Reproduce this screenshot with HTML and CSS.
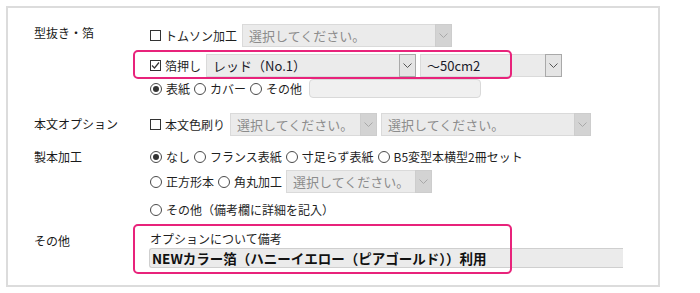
FILE: index.html
```html
<!DOCTYPE html>
<html lang="ja">
<head>
<meta charset="utf-8">
<title>オプション</title>
<link rel="stylesheet" href="styles.css">
</head>
<body>
<div class="box">
  <div class="row row1">
    <div class="label lh18">型抜き・箔</div>
    <div class="content">
      <div class="line h23">
        <span class="cb"></span><span class="opt">トムソン加工</span>
        <span class="sel dis w210 ml5"><span class="val">選択してください。</span><span class="arr"><svg width="9" height="6" viewBox="0 0 9 6"><path d="M0.5 0.5 L4.5 4.5 L8.5 0.5" fill="none" stroke="currentColor" stroke-width="1"/></svg></span></span>
      </div>
      <div class="line h23 mt7">
        <span class="hl hl1"></span>
        <span class="cb"><svg width="9" height="9" viewBox="0 0 9 9"><path d="M1 4.5 L3.5 7 L8 1.5" fill="none" stroke="#333" stroke-width="1.2"/></svg></span><span class="opt">箔押し</span>
        <span class="sel w210 ml5"><span class="val">レッド（No.1）</span><span class="arr"><svg width="9" height="6" viewBox="0 0 9 6"><path d="M0.5 0.5 L4.5 4.5 L8.5 0.5" fill="none" stroke="currentColor" stroke-width="1"/></svg></span></span>
        <span class="sel w142 ml4"><span class="val">～50cm2</span><span class="arr"><svg width="9" height="6" viewBox="0 0 9 6"><path d="M0.5 0.5 L4.5 4.5 L8.5 0.5" fill="none" stroke="currentColor" stroke-width="1"/></svg></span></span>
      </div>
      <div class="line h19 mt2">
        <span class="ritem"><span class="rd on"></span><span class="opt">表紙</span></span>
        <span class="ritem"><span class="rd"></span><span class="opt">カバー</span></span>
        <span class="ritem"><span class="rd"></span><span class="opt">その他</span></span>
        <span class="txt"></span>
      </div>
    </div>
  </div>

  <div class="row row2">
    <div class="label lh21">本文オプション</div>
    <div class="content">
      <div class="line h23">
        <span class="cb"></span><span class="opt">本文色刷り</span>
        <span class="sel dis w147 ml5"><span class="val">選択してください。</span><span class="arr"><svg width="9" height="6" viewBox="0 0 9 6"><path d="M0.5 0.5 L4.5 4.5 L8.5 0.5" fill="none" stroke="currentColor" stroke-width="1"/></svg></span></span>
        <span class="sel dis w210 ml4"><span class="val">選択してください。</span><span class="arr"><svg width="9" height="6" viewBox="0 0 9 6"><path d="M0.5 0.5 L4.5 4.5 L8.5 0.5" fill="none" stroke="currentColor" stroke-width="1"/></svg></span></span>
      </div>
    </div>
  </div>

  <div class="row row3">
    <div class="label lh18">製本加工</div>
    <div class="content">
      <div class="line h18">
        <span class="ritem"><span class="rd on"></span><span class="opt">なし</span></span>
        <span class="ritem"><span class="rd"></span><span class="opt">フランス表紙</span></span>
        <span class="ritem"><span class="rd"></span><span class="opt">寸足らず表紙</span></span>
        <span class="ritem"><span class="rd"></span><span class="opt">B5変型本横型2冊セット</span></span>
      </div>
      <div class="line h23 mt4">
        <span class="ritem"><span class="rd"></span><span class="opt">正方形本</span></span>
        <span class="ritem"><span class="rd"></span><span class="opt">角丸加工</span></span>
        <span class="sel dis w146"><span class="val">選択してください。</span><span class="arr"><svg width="9" height="6" viewBox="0 0 9 6"><path d="M0.5 0.5 L4.5 4.5 L8.5 0.5" fill="none" stroke="currentColor" stroke-width="1"/></svg></span></span>
      </div>
      <div class="line h18 mt8">
        <span class="ritem"><span class="rd"></span><span class="opt">その他（備考欄に詳細を記入）</span></span>
      </div>
    </div>
  </div>

  <div class="row row4">
    <div class="label lh18">その他</div>
    <div class="content">
      <span class="hl hl2"></span>
      <div class="note">オプションについて備考</div>
      <div class="inp">NEWカラー箔（ハニーイエロー（ピアゴールド））利用</div>
    </div>
  </div>
</div>
</body>
</html>
```

FILE: styles.css
```css
* { box-sizing: border-box; }

body {
  margin: 0;
  background: #fff;
  color: #222;
  font-family: "Noto Sans CJK JP", "Noto Sans", sans-serif;
  font-size: 12px;
}

.box {
  margin: 6px;
  width: 654px;
  height: 281px;
  border: 2px solid #dcdcdc;
  padding: 16px 0 0 26px;
}

.row {
  display: grid;
  grid-template-columns: 116px 1fr;
}
.row2 { margin-top: 15px; }
.row3 { margin-top: 12px; }
.row4 { margin-top: 13px; }

.label { color: #1a1a1a; white-space: nowrap; }
.lh18 { line-height: 18px; }
.lh21 { line-height: 21px; }

.content { position: relative; }

.line {
  position: relative;
  display: flex;
  align-items: center;
  white-space: nowrap;
}
.h23 { height: 23px; }
.h19 { height: 19px; }
.h18 { height: 18px; }
.mt2 { margin-top: 2px; }
.mt4 { margin-top: 4px; }
.mt7 { margin-top: 7px; }
.mt8 { margin-top: 8px; }
.ml4 { margin-left: 4px; }
.ml5 { margin-left: 5px; }

.opt { line-height: 14px; color: #1f1f1f; }

.cb {
  flex: none;
  width: 11px;
  height: 11px;
  margin-right: 4px;
  border: 1px solid #333;
  background: #fff;
  display: flex;
  align-items: center;
  justify-content: center;
}

.ritem {
  display: flex;
  align-items: center;
  margin-right: 4px;
}
.rd {
  flex: none;
  width: 12px;
  height: 12px;
  margin-right: 4px;
  border: 1px solid #4a4a4a;
  border-radius: 50%;
  background: #fff;
  display: flex;
  align-items: center;
  justify-content: center;
}
.rd.on::after {
  content: "";
  width: 6px;
  height: 6px;
  border-radius: 50%;
  background: #333;
}

.sel {
  flex: none;
  display: flex;
  height: 23px;
  background: #ebebeb;
  border: 1px solid #dadada;
}
.w210 { width: 210px; }
.w147 { width: 147px; }
.w146 { width: 146px; }
.w142 { width: 142px; }

.sel .val {
  flex: 1;
  padding-left: 6px;
  font-size: 13px;
  line-height: 21px;
  color: #1a1a2a;
  overflow: hidden;
}
.sel.dis .val { color: #8c8c8c; }

.arr {
  flex: none;
  width: 17px;
  margin: -1px -1px -1px 0;
  background: #e4e4e4;
  border: 1px solid #a9a9a9;
  color: #555;
  display: flex;
  align-items: center;
  justify-content: center;
}
.sel.dis .arr {
  background: #d3d3d3;
  border-color: #cdcdcd;
  color: #a8a8a8;
}

.txt {
  flex: none;
  width: 172px;
  height: 19px;
  margin-left: 3px;
  background: #f0f0f0;
  border: 1px solid #d9d9d9;
  border-radius: 4px;
}

.note {
  line-height: 14px;
  color: #1f1f1f;
}
.inp {
  margin: 2px 0 0 -1px;
  width: 474px;
  height: 20px;
  padding-left: 2px;
  background: #ebebeb;
  border: 1px solid #cfcfcf;
  border-right: none;
  border-radius: 3px 0 0 3px;
  font-size: 13.5px;
  font-weight: bold;
  line-height: 18px;
  color: #111;
  white-space: nowrap;
}

.hl {
  position: absolute;
  border: 2px solid #e8237b;
  border-radius: 5px;
  pointer-events: none;
}
.hl1 { left: -17px; top: -4px; width: 379px; height: 29px; }
.hl2 { left: -17px; top: -8px; width: 379px; height: 50px; }
```
